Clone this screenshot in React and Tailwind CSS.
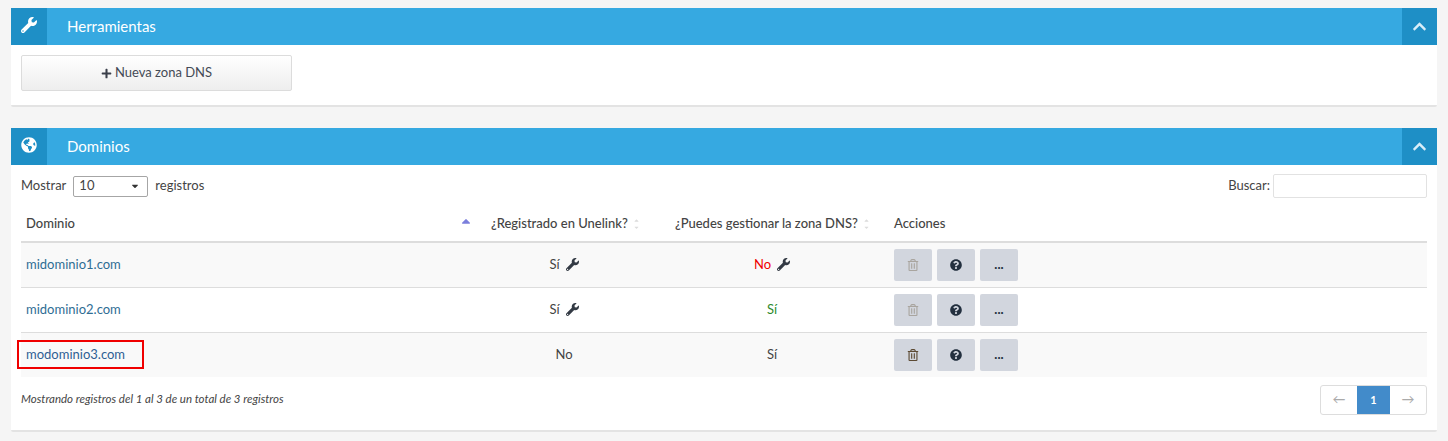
import React from 'react';
import { FaWrench, FaGlobeAmericas, FaChevronUp, FaPlus, FaRegTrashAlt, FaQuestionCircle, FaCaretUp, FaCaretDown } from 'react-icons/fa';

const rows = [
  { domain: 'midominio1.com', registered: 'Sí', regTool: true, dns: 'No', dnsColor: 'text-[#f00000]', dnsTool: true, canDelete: false, striped: true },
  { domain: 'midominio2.com', registered: 'Sí', regTool: true, dns: 'Sí', dnsColor: 'text-[#2e8b2e]', dnsTool: false, canDelete: false, striped: false },
  { domain: 'modominio3.com', registered: 'No', regTool: false, dns: 'Sí', dnsColor: 'text-[#444444]', dnsTool: false, canDelete: true, striped: true, marked: true },
];

const PanelHeader = ({ icon, title }) => (
  <div className="flex h-[37px] items-center bg-[#36a9e1] text-white">
    <div className="flex h-full w-[36px] items-center justify-center bg-[#1e8fc6] pb-[3px] text-[16px]">{icon}</div>
    <h2 className="ml-[20px] flex-1 text-[15px] font-normal">{title}</h2>
    <div className="flex h-full w-[35px] items-center justify-center bg-[#1e8fc6] text-[15px] text-[#d8eef9]">
      <FaChevronUp />
    </div>
  </div>
);

const SortArrows = ({ className }) => (
  <span className={`flex flex-col text-[11px] leading-[7px] text-[#dcdcdc] ${className}`}>
    <FaCaretUp className="h-[7px]" />
    <FaCaretDown className="h-[7px]" />
  </span>
);

const ActionButton = ({ children, className = '' }) => (
  <button className={`flex h-[32px] w-[38px] items-center justify-center rounded-[2px] bg-[#d2d6de] ${className}`}>{children}</button>
);

const App = () => {
  return (
    <div className="h-[441px] overflow-hidden bg-[#f5f5f5] px-[11px] pt-[8px] font-['Lato',sans-serif] text-[13px] text-[#444444]">
      <section className="h-[99px] rounded-b-[2px] border-b-2 border-[#e3e3e3] bg-white">
        <PanelHeader icon={<FaWrench />} title="Herramientas" />
        <div className="px-[10px] pt-[10px]">
          <button className="flex h-[36px] w-[271px] items-center justify-center gap-[3px] rounded-[2px] border border-[#dcdcdc] bg-gradient-to-b from-white to-[#eeeeee] text-[13px] text-[#444a55]">
            <FaPlus className="text-[11px] text-[#3a3f4a]" />
            Nueva zona DNS
          </button>
        </div>
      </section>

      <section className="mt-[21px] h-[304px] rounded-b-[2px] border-b-2 border-[#e3e3e3] bg-white">
        <PanelHeader icon={<FaGlobeAmericas />} title="Dominios" />
        <div className="px-[10px]">
          <div className="flex h-[42px] items-center justify-between">
            <div className="flex items-center">
              Mostrar
              <div className="mx-[7px] flex h-[21px] w-[75px] items-center justify-between rounded-[2px] border border-[#a6a6a6] pl-[5px] pr-[7px]">
                10
                <FaCaretDown className="text-[10px] text-[#333333]" />
              </div>
              registros
            </div>
            <div className="flex items-center gap-[3px]">
              Buscar:
              <input className="h-[24px] w-[154px] rounded-[2px] border border-[#e2e2e2] outline-none" />
            </div>
          </div>

          <table className="w-[1406px] table-fixed border-collapse">
            <colgroup>
              <col className="w-[465px]" />
              <col className="w-[184px]" />
              <col className="w-[219px]" />
              <col />
            </colgroup>
            <thead>
              <tr className="h-[35px] border-b-2 border-[#dddddd] text-left">
                <th className="pl-[5px] pr-[13px] font-medium">
                  <div className="flex items-center justify-between">
                    Dominio
                    <FaCaretUp className="mb-[7px] text-[14px] text-[#7b7fdc]" />
                  </div>
                </th>
                <th className="pl-[5px] font-medium">
                  <div className="flex items-center gap-[3px]">
                    ¿Registrado en Unelink?
                    <SortArrows />
                  </div>
                </th>
                <th className="pl-[5px] font-medium">
                  <div className="flex items-center gap-[3px] whitespace-nowrap">
                    ¿Puedes gestionar la zona DNS?
                    <SortArrows />
                  </div>
                </th>
                <th className="pl-[5px] font-medium">Acciones</th>
              </tr>
            </thead>
            <tbody>
              {rows.map((row, index) => (
                <tr key={row.domain} className={`h-[45px] ${index < 2 ? 'border-b border-[#dddddd]' : ''} ${row.striped ? 'bg-[#f9f9f9]' : 'bg-white'}`}>
                  <td className="pl-[5px]">
                    <a
                      href="#"
                      className={row.marked
                        ? '-ml-[9px] block h-[29px] w-[127px] border-2 border-[#f00000] pl-[7px] leading-[25px] text-[#2f5f94]'
                        : 'text-[#2f6d94]'}
                    >
                      {row.domain}
                    </a>
                  </td>
                  <td className="pl-[5px] pr-[33px]">
                    <div className="flex items-center justify-center gap-[6px]">
                      {row.registered}
                      {row.regTool && <FaWrench className="text-[13px] text-[#333a44]" />}
                    </div>
                  </td>
                  <td className="pl-[5px] pr-[20px]">
                    <div className={`flex items-center justify-center gap-[6px] ${row.dnsColor}`}>
                      {row.dns}
                      {row.dnsTool && <FaWrench className="text-[13px] text-[#333a44]" />}
                    </div>
                  </td>
                  <td className="pl-[5px]">
                    <div className="flex gap-[5px]">
                      <ActionButton>
                        <FaRegTrashAlt className={row.canDelete ? 'text-[12px] text-[#5c4a33]' : 'text-[12px] text-[#a9a59f]'} />
                      </ActionButton>
                      <ActionButton>
                        <FaQuestionCircle className="text-[12px] text-[#23303f]" />
                      </ActionButton>
                      <ActionButton className="font-bold text-[#23303f]">...</ActionButton>
                    </div>
                  </td>
                </tr>
              ))}
            </tbody>
          </table>

          <div className="mt-[8px] flex items-start justify-between">
            <p className="pt-[5px] text-[11.5px] italic">Mostrando registros del 1 al 3 de un total de 3 registros</p>
            <div className="flex h-[30px] overflow-hidden rounded-[3px] border border-[#dddddd] text-[#aaaaaa]">
              <span className="flex w-[36px] items-center justify-center">←</span>
              <span className="flex w-[33px] items-center justify-center bg-[#428bca] text-[11px] font-bold text-white">1</span>
              <span className="flex w-[36px] items-center justify-center">→</span>
            </div>
          </div>
        </div>
      </section>
    </div>
  );
};

export default App;
